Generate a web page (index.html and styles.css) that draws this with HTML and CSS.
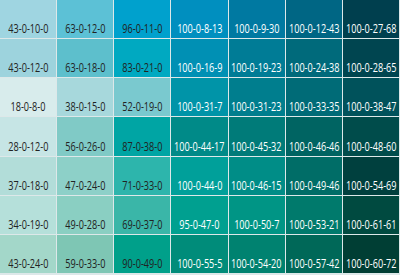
FILE: index.html
```html
<!DOCTYPE html>
<html>
<head>
<meta charset="utf-8">
<link rel="stylesheet" href="styles.css">
</head>
<body>
<div class="grid">
  <div class="cell dk" style="background:#9fd5e1"><span class="lbl">43-0-10-0</span></div>
  <div class="cell dk" style="background:#5cc1d6"><span class="lbl">63-0-12-0</span></div>
  <div class="cell dk" style="background:#00a1cd"><span class="lbl">96-0-11-0</span></div>
  <div class="cell lt" style="background:#008fbf"><span class="lbl">100-0-8-13</span></div>
  <div class="cell lt" style="background:#0079a1"><span class="lbl">100-0-9-30</span></div>
  <div class="cell lt" style="background:#006684"><span class="lbl">100-0-12-43</span></div>
  <div class="cell lt" style="background:#003f4e"><span class="lbl">100-0-27-68</span></div>

  <div class="cell dk" style="background:#9dd3dd"><span class="lbl">43-0-12-0</span></div>
  <div class="cell dk" style="background:#5dbfcc"><span class="lbl">63-0-18-0</span></div>
  <div class="cell dk" style="background:#00a9c1"><span class="lbl">83-0-21-0</span></div>
  <div class="cell lt" style="background:#0090b4"><span class="lbl">100-0-16-9</span></div>
  <div class="cell lt" style="background:#007c96"><span class="lbl">100-0-19-23</span></div>
  <div class="cell lt" style="background:#006a7b"><span class="lbl">100-0-24-38</span></div>
  <div class="cell lt" style="background:#004550"><span class="lbl">100-0-28-65</span></div>

  <div class="cell dk" style="background:#d8ecec"><span class="lbl">18-0-8-0</span></div>
  <div class="cell dk" style="background:#a7d8dc"><span class="lbl">38-0-15-0</span></div>
  <div class="cell dk" style="background:#7ac9cf"><span class="lbl">52-0-19-0</span></div>
  <div class="cell lt" style="background:#0094a8"><span class="lbl">100-0-31-7</span></div>
  <div class="cell lt" style="background:#007e8e"><span class="lbl">100-0-31-23</span></div>
  <div class="cell lt" style="background:#006b77"><span class="lbl">100-0-33-35</span></div>
  <div class="cell lt" style="background:#00525b"><span class="lbl">100-0-38-47</span></div>

  <div class="cell dk" style="background:#c6e5e5"><span class="lbl">28-0-12-0</span></div>
  <div class="cell dk" style="background:#80cac6"><span class="lbl">56-0-26-0</span></div>
  <div class="cell dk" style="background:#00a5a4"><span class="lbl">87-0-38-0</span></div>
  <div class="cell lt" style="background:#008a88"><span class="lbl">100-0-44-17</span></div>
  <div class="cell lt" style="background:#007b79"><span class="lbl">100-0-45-32</span></div>
  <div class="cell lt" style="background:#006462"><span class="lbl">100-0-46-46</span></div>
  <div class="cell lt" style="background:#004c4b"><span class="lbl">100-0-48-60</span></div>

  <div class="cell dk" style="background:#b2ddd9"><span class="lbl">37-0-18-0</span></div>
  <div class="cell dk" style="background:#8dd0c8"><span class="lbl">47-0-24-0</span></div>
  <div class="cell dk" style="background:#2db5ac"><span class="lbl">71-0-33-0</span></div>
  <div class="cell lt" style="background:#00a09a"><span class="lbl">100-0-44-0</span></div>
  <div class="cell lt" style="background:#008d87"><span class="lbl">100-0-46-15</span></div>
  <div class="cell lt" style="background:#006d67"><span class="lbl">100-0-49-46</span></div>
  <div class="cell lt" style="background:#00403e"><span class="lbl">100-0-54-69</span></div>

  <div class="cell dk" style="background:#b5e0da"><span class="lbl">34-0-19-0</span></div>
  <div class="cell dk" style="background:#8acfc2"><span class="lbl">49-0-28-0</span></div>
  <div class="cell dk" style="background:#3ab6a8"><span class="lbl">69-0-37-0</span></div>
  <div class="cell lt" style="background:#00a090"><span class="lbl">95-0-47-0</span></div>
  <div class="cell lt" style="background:#009585"><span class="lbl">100-0-50-7</span></div>
  <div class="cell lt" style="background:#007a6c"><span class="lbl">100-0-53-21</span></div>
  <div class="cell lt" style="background:#004a40"><span class="lbl">100-0-61-61</span></div>

  <div class="cell dk" style="background:#a3d7c9"><span class="lbl">43-0-24-0</span></div>
  <div class="cell dk" style="background:#7ec6b4"><span class="lbl">59-0-33-0</span></div>
  <div class="cell dk" style="background:#00a08a"><span class="lbl">90-0-49-0</span></div>
  <div class="cell lt" style="background:#008c7a"><span class="lbl">100-0-55-5</span></div>
  <div class="cell lt" style="background:#008270"><span class="lbl">100-0-54-20</span></div>
  <div class="cell lt" style="background:#006858"><span class="lbl">100-0-57-42</span></div>
  <div class="cell lt" style="background:#003e34"><span class="lbl">100-0-60-72</span></div>
</div>
</body>
</html>
```
FILE: styles.css
```css
html, body {
  margin: 0;
  padding: 0;
  width: 400px;
  height: 275px;
  overflow: hidden;
  background: #dde8e9;
}
.grid {
  width: 400px;
  height: 275px;
  box-sizing: border-box;
  padding: 0 1px 2px 0;
  display: grid;
  grid-template-columns: repeat(7, minmax(0, 1fr));
  grid-template-rows: repeat(7, minmax(0, 1fr));
  gap: 1px;
  background: #dde8e9;
}
.cell {
  display: flex;
  align-items: flex-end;
  justify-content: center;
  padding-bottom: 3px;
  overflow: hidden;
  font-family: "Open Sans", "Liberation Sans", sans-serif;
  font-size: 12px;
  line-height: 13px;
  white-space: nowrap;
}
.lbl {
  display: inline-block;
  transform: scaleX(0.76);
  transform-origin: center;
}
.dk { color: #222; }
.lt { color: #fff; }
```
